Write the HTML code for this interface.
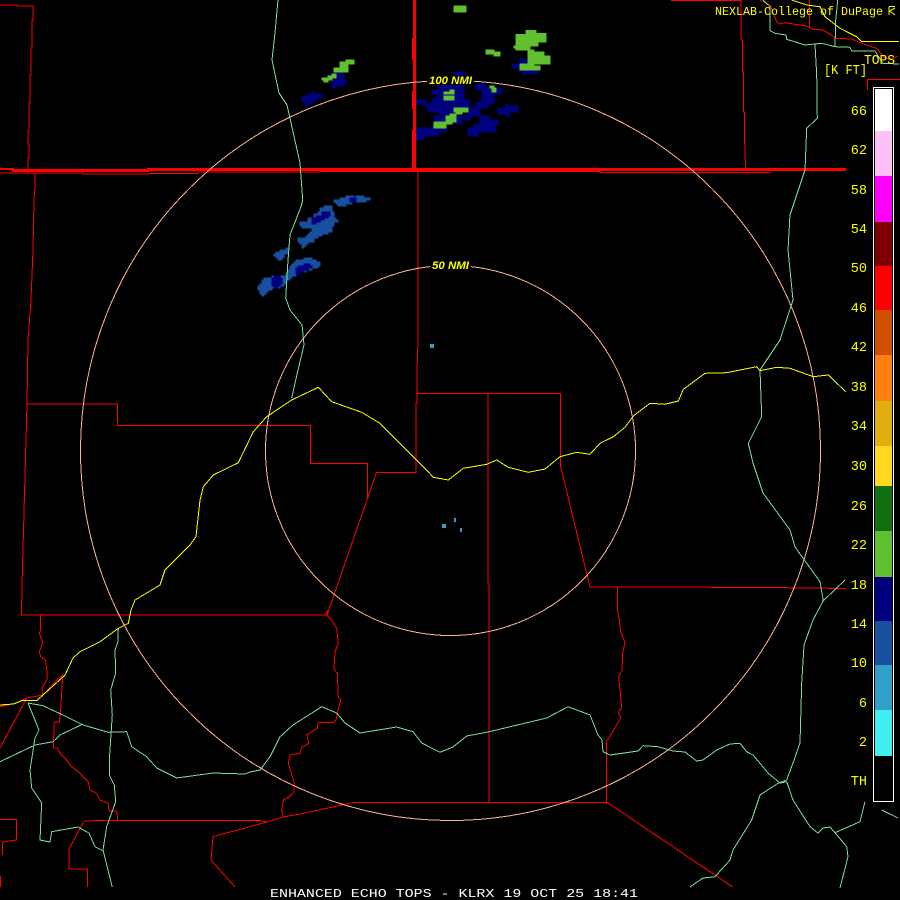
<!DOCTYPE html>
<html><head><meta charset="utf-8"><title>Enhanced Echo Tops</title>
<style>
html,body{margin:0;padding:0;background:#000;width:900px;height:900px;overflow:hidden}
svg{display:block}
.l{fill:none;stroke-width:1;shape-rendering:crispEdges;vector-effect:non-scaling-stroke}
.r{stroke:#f00}.g{stroke:#78e09c}.y{stroke:#ff0}.p{stroke:#ffb38f}
text{font-family:"Liberation Mono",monospace;fill:#ff0}
.k text{font-size:13.5px;text-anchor:end}
.b{stroke-width:2}
</style></head><body>
<svg width="900" height="900" viewBox="0 0 900 900" xmlns="http://www.w3.org/2000/svg">
<rect width="900" height="900" fill="#000"/>
<!-- radar north -->
<g transform="translate(290,0) scale(.33333)" shape-rendering="crispEdges">
<path class="b" fill="#00007f" stroke="#00007f" d="M492 216H522V228H492Z
M444 252H522V270H444Z M558 252H588V264H558Z M558 264H636V270H558Z
M426 270H522V282H426Z M576 270H636V282H576Z
M444 282H522V294H444Z M576 282H612V300H576Z
M426 294H522V300H426Z
M378 300H408V312H378Z M426 300H540V312H426Z M576 300H612V312H576Z
M408 312H540V324H408Z M558 306H594V324H558Z
M414 324H570V336H414Z
M450 336H492V348H450Z M534 336H570V348H534Z
M432 348H540V360H432Z M570 348H600V360H570Z
M432 360H516V372H432Z M570 360H624V372H570Z
M426 372H468V384H426Z M552 372H618V384H552Z
M378 384H468V396H378Z M534 384H618V396H534Z
M378 396H444V408H378Z M534 396H564V408H534Z
M378 408H402V420H378Z
M648 312H654V318H648Z M648 318H684V324H648Z M624 324H684V336H624Z M624 336H660V342H624Z M648 342H660V348H648Z
M690 175H708V185H690Z M690 185H726V192H690Z M666 192H690V204H666Z M684 204H690V210H684Z M696 210H744V222H696Z
M132 216H156V222H132Z M114 222H162V234H114Z M138 234H156V240H138Z M126 240H168V252H126Z M126 252H162V258H126Z M126 258H138V264H126Z
M66 276H72V282H66Z M54 282H96V288H54Z M36 288H96V294H36Z M36 294H84V300H36Z M36 300H72V306H36Z M48 306H66V312H48Z M48 312H54V318H48Z"/>
<path class="b" fill="#60c030" stroke="#60c030" d="M492 18H528V36H492Z
M708 91H738V100H708Z M708 100H768V103H708Z M678 103H768V126H678Z M678 126H744V138H678Z M672 138H720V144H672Z M678 144H720V150H678Z
M714 150H732V156H714Z M714 156H762V168H714Z M714 168H780V192H714Z
M690 192H732V198H690Z M690 198H750V204H690Z M690 204H750V210H690Z
M588 150H612V156H588Z M588 156H630V162H588Z M612 162H630V168H612Z
M168 180H192V186H168Z M150 186H192V192H150Z M150 192H174V204H150Z M132 204H174V216H132Z
M126 222H138V228H126Z M114 228H138V234H114Z M96 234H126V240H96Z M102 240H114V246H102Z
M492 324H534V336H492Z M498 336H516V342H498Z M480 342H498V348H480Z M468 348H498V366H468Z M432 366H486V372H432Z M432 372H468V384H432Z
M480 270H492V276H480Z M462 276H492V282H462Z M462 288H492V294H462Z M462 294H492V300H462Z
M600 258H612V264H600Z M606 264H618V276H606Z"/>
</g>
<g transform="translate(240,180) scale(.33333)" shape-rendering="crispEdges">
<path class="b" fill="#1850a0" stroke="#1850a0" d="M318 48H342V54H318Z M348 48H372V54H348Z M300 54H390V60H300Z M282 60H378V66H282Z M288 66H336V72H288Z M294 72H318V78H294Z
M252 78H276V84H252Z M240 84H276V96H240Z M234 96H282V102H234Z M222 102H282V114H222Z M204 114H288V120H204Z M204 120H294V126H204Z M180 126H282V138H180Z M186 138H276V144H186Z M216 144H276V156H216Z M210 156H264V162H210Z M204 162H246V168H204Z M198 168H234V174H198Z M174 174H222V186H174Z M180 186H204V192H180Z M186 192H198V198H186Z M186 198H192V204H186Z
M138 204H144V210H138Z M120 210H144V216H120Z M108 216H144V222H108Z M102 222H132V228H102Z M108 228H132V234H108Z M114 234H126V240H114Z
M192 234H216V240H192Z M168 240H228V246H168Z M162 246H240V252H162Z M156 252H240V258H156Z M150 258H234V264H150Z M150 264H216V270H150Z M144 270H198V276H144Z M144 276H180V282H144Z M138 282H168V288H138Z M96 288H156V294H96Z M72 294H150V300H72Z M66 300H140V312H66Z M60 312H132V318H60Z M54 318H120V324H54Z M54 324H96V330H54Z M60 330H84V336H60Z M60 336H78V342H60Z M66 342H72V348H66Z"/>
<path class="b" fill="#00007f" stroke="#00007f" d="M330 54H348V66H330Z M246 96H270V108H246Z M228 108H264V114H228Z M216 114H252V120H216Z M216 120H240V126H216Z M216 126H228V132H216Z
M192 252H210V258H192Z M174 258H216V264H174Z M168 264H204V270H168Z M168 270H192V276H168Z M168 276H180V282H168Z
M102 288H120V294H102Z M96 294H126V312H96Z M96 312H120V318H96Z M102 318H114V324H102Z"/>
</g>
<g fill="#30a0c8" shape-rendering="crispEdges">
<rect x="430" y="344" width="4" height="4"/><rect x="442" y="524" width="4" height="4"/>
<rect x="454" y="518" width="2" height="4"/><rect x="460" y="528" width="2" height="4"/>
</g>
<!-- thick red -->
<g fill="#f00" shape-rendering="crispEdges">
<rect x="0" y="168" width="14" height="2"/><rect x="12" y="169" width="137" height="3"/><rect x="147" y="168" width="699" height="3"/>
<rect x="413" y="0" width="3" height="170"/><rect x="412" y="38" width="1" height="22"/><rect x="412" y="91" width="1" height="18"/><rect x="412" y="130" width="1" height="40"/>
</g>
<!-- thin red -->
<g class="l r">
<path class="l r" d="M0 173H83V174H150V173.500H198V172H320V171.500H600V172.500H770V173"/>
<path class="l r" d="M0 5H17V6H33V20H32V48H31V75H30V103H29V131H28V144H29V158H28V173H35V186L34 200L33 250L31 300L28 340L27 403L22 585L21.500 615H327"/>
<path class="l r" d="M27.500 404H117.500V425.500H310.500V463.500H367.500V497"/>
<path class="l r" d="M327 615L376.500 472.500H416V403H417V370L418 340V172"/>
<path class="l r" d="M417 393.500H435V393.500H560.500V466L590 587H650L770 587.500L846 588.500"/>
<path class="l r" d="M488 393.500V584H489V802"/>
<path class="l r" d="M617.500 587V610L619.300 620L621 633L625 642L622.700 653L622 670L618.700 677L620 690L621.700 708L618.300 712L620.700 718L611.700 733L606.500 741.700V802L732.700 887"/>
<path class="l r" d="M356 802.500H606.500"/>
<path class="l r" d="M356 802L300 814L283 817L267 822L213 836.700L211 860L235 887"/>
<path class="l r" d="M84 821L102 820.500H259L267 822"/>
<path class="l r" d="M84 821L69 849V869H87.500V887"/>
<path class="l r" d="M0 819.700H16.500V840L2.700 842V855"/>
<path class="l r" d="M0.500 876V887"/>
<path class="l r" d="M40.700 615V630L39.300 633L42.700 643L39.300 651.700L40.700 656.700L45.300 660L47.300 673L46.700 680.700L41.700 688L43 695L26.700 698L16.700 703L0 706.700"/>
<path class="l r" d="M26.700 698L0 748"/>
<path class="l r" d="M43.300 695L55 681.700L62.700 675L60.700 710L59.300 722H54.300L53.300 748"/>
<path class="l r" d="M53.300 748H57.300L60 753.300L66.700 760L71.700 766.700L80 773.300L88.300 781.700L90 790L96.700 793.300L100 800L108.300 803.300L109 811H116.700L117.700 820"/>
<path class="l r" d="M327.300 610L326.300 615L331.700 620L336.700 628.300L338.300 643.300L335 651.700L334 669.300L337.300 673.300L338.300 696.700L340.700 700L337.300 713.300L336 720L333.300 722.300H318.300L317.300 728.300L306.700 735L309 743.300L301.700 747.300L300 753.300L290 755L288.300 763.300L294.300 783.300L294 791.700L289.300 796.700L283.300 800L281.700 810L283.300 817.300"/>
<path class="l r" d="M671 0.700H741V40H742.300V72H743.300V112H744.300V130L745.500 168"/>
<path class="l r" d="M809.500 0V28"/>
<path class="l r" d="M760 0L770 5L776.700 21.700L780 24L785 22.700L806.700 26L813.300 29.300L823 30L836.700 38.300L851.700 39L860 42.700L876.700 48.300L883 56.700L890 60L898 56"/>
<path class="l r" d="M867.500 90V79.500H900"/>
</g>
<!-- green -->
<g>
<path class="l g" d="M763 0L770 6.700V30.700L775 33.300L786 35L786.700 39.300L805 45L821.700 43.300L835 46.700L850 47.300L851.700 51H875L882.700 63.300L899 64"/>
<path class="l g" d="M837.700 0L835.700 20L835 46.700"/>
<path class="l g" d="M815 44.300L816.700 75L817.300 118.300L806.700 128.300L805 170L795 200L790 215L788 250L793 300L780 340L760 370L761.700 416.700L748.300 443.300L753 463L763 493L790 530L795 547L820 581.700L823.300 600.700L813 620L804 645L801.700 683L800 743L793 763L786.700 780L778 783.300L760 795L751.700 820L733 850L730 860L715 876.700L703 878L690 887"/>
<path class="l g" d="M823.300 600.700L845 580"/>
<path class="l g" d="M250 772L260 770L270 756.700L280 736.700L293 725L321.700 706.700L336.700 713L345 723L360 733L396.700 727L413 731.700L421.700 743L440 752.300L453 747L466.700 736L488 732L546.700 718L568 706.700L590 715L598 735L602 740L603 751.700L610 755L638 751L643 745.700L658 746.700L673 751L685 752L696.700 761L703 760L716.700 750L730 744L740 743.300L746.700 751.700L753 755L768 773L780 783L786.700 781.700L793 800L810 826.700L818 833L823 828L830 827L835 832.700L860 821.700L865 801.700"/>
<path class="l g" d="M835 832.700L846.700 846.700L848 856.700L840 888"/>
<path class="l g" d="M881.700 810L898 818"/>
<path class="l g" d="M250 772L245 774L213 773L176.700 778L156.700 768L146.700 756.700L131.700 746.700L126.700 731.700L108.300 732.300L83 725L63 715L43 705.700L28 703"/>
<path class="l g" d="M83 724L60 735L53 741.700L35 745L0 761.700"/>
<path class="l g" d="M28 703L39 730L35 738L30 770L31.700 788L41.700 803L40 840L50 842L51.700 831.700L78 827L89 833L95 846.700L103 850.700"/>
<path class="l g" d="M118.300 628L118 641.700L115 650L115.700 673L110.700 690L112.300 715L109.300 760V775L114.300 785L115.700 801.700L106.700 826.700L103 850L112.300 887"/>
<path class="l g" d="M278 0L275 33L272 60L279 93L287 105L300 163L302.700 200L301 206.700L290 235L288 260L285.700 298L290 310L302 325L304 345L298 370L291.700 398"/>
</g>
<!-- yellow -->
<g>
<path class="l y" d="M0 705L13.300 704L21.700 700.700H36.700L65 675L73 658L80 651.700L100 641.700L118.300 628.300L128.300 623.300L131 610L135 600L160 585L165 570L190 545L196 536.700L200 500L203.300 486.700L213.300 475L238.300 462.700L253.300 431.700L266.700 416.700L291.700 400L318.300 387.300L331.700 401.700L361.700 412.300L380 423.300L425 468.300L433.300 477.300L448.300 480L463.300 468.300L486.700 464.300L496.700 460L508.300 467.300L528.300 472.300L545 469L560 456.700L576.700 452.300L590 454.300L600 443.300L613.300 436.700L625 427.300L633.300 416L650 403.300L665 404.300L678.300 401L683.300 389.300L705 373.300L726.700 372.700L756.700 366.700L760 370.700L776.700 367.300L790 368.300L813.300 376.700L828.300 375L845.700 391.700"/>
<path class="l y" d="M791.700 0L806.700 5L820 6.700L825 16.700L840 28.300L856.700 36.700L861.700 41.700H899"/>
</g>
<!-- range rings -->
<circle class="l p" cx="450.500" cy="450.500" r="185"/>
<circle class="l p" cx="450.500" cy="450.500" r="370"/>
<rect x="427" y="76" width="47" height="9" fill="#000"/>
<rect x="430" y="260" width="41" height="11" fill="#000"/>
<text x="429" y="84" font-size="11" font-weight="bold" font-style="italic" textLength="43" lengthAdjust="spacingAndGlyphs" style='font-family:"Liberation Sans",sans-serif'>100 NMI</text>
<text x="432" y="269" font-size="11" font-weight="bold" font-style="italic" textLength="37" lengthAdjust="spacingAndGlyphs" style='font-family:"Liberation Sans",sans-serif'>50 NMI</text>
<!-- header text -->
<text x="715" y="15" font-size="12" textLength="168" lengthAdjust="spacingAndGlyphs">NEXLAB-College of DuPage</text>
<path d="M889 6.500H895M889 6.500V15M895 8L889.500 11L895 15" fill="none" stroke="#ff0"/>
<text x="864" y="64" font-size="13.500" textLength="31" lengthAdjust="spacingAndGlyphs">TOPS</text>
<text x="824" y="74" font-size="13.500" textLength="43" lengthAdjust="spacingAndGlyphs">[K FT]</text>
<!-- colour bar -->
<g shape-rendering="crispEdges">
<rect x="873.500" y="87.500" width="20" height="714" fill="#000" stroke="#fff"/>
<rect x="875" y="89" width="17" height="42" fill="#fff"/>
<rect x="875" y="131" width="17" height="45" fill="#ffc0f8"/>
<rect x="875" y="176" width="17" height="46" fill="#ff00ff"/>
<rect x="875" y="222" width="17" height="44" fill="#7f0000"/>
<rect x="875" y="266" width="17" height="44" fill="#ff0000"/>
<rect x="875" y="310" width="17" height="45" fill="#cf5000"/>
<rect x="875" y="355" width="17" height="46" fill="#ff7f10"/>
<rect x="875" y="401" width="17" height="45" fill="#e0b010"/>
<rect x="875" y="446" width="17" height="40" fill="#ffd820"/>
<rect x="875" y="486" width="17" height="45" fill="#107010"/>
<rect x="875" y="531" width="17" height="46" fill="#60c030"/>
<rect x="875" y="577" width="17" height="44" fill="#00007f"/>
<rect x="875" y="621" width="17" height="44" fill="#1850a0"/>
<rect x="875" y="665" width="17" height="45" fill="#30a0c8"/>
<rect x="875" y="710" width="17" height="46" fill="#40f0f0"/>
</g>
<g class="k">
<text x="867" y="115">66</text><text x="867" y="154">62</text><text x="867" y="194">58</text>
<text x="867" y="233">54</text><text x="867" y="272">50</text><text x="867" y="312">46</text>
<text x="867" y="351">42</text><text x="867" y="391">38</text><text x="867" y="430">34</text>
<text x="867" y="470">30</text><text x="867" y="510">26</text><text x="867" y="549">22</text>
<text x="867" y="589">18</text><text x="867" y="628">14</text><text x="867" y="667">10</text>
<text x="867" y="707">6</text><text x="867" y="746">2</text><text x="867" y="785">TH</text>
</g>
<!-- footer -->
<text x="270" y="897" font-size="11.500" textLength="368" lengthAdjust="spacingAndGlyphs" style="fill:#fff">ENHANCED ECHO TOPS - KLRX 19 OCT 25 18:41</text>
</svg>
</body></html>
